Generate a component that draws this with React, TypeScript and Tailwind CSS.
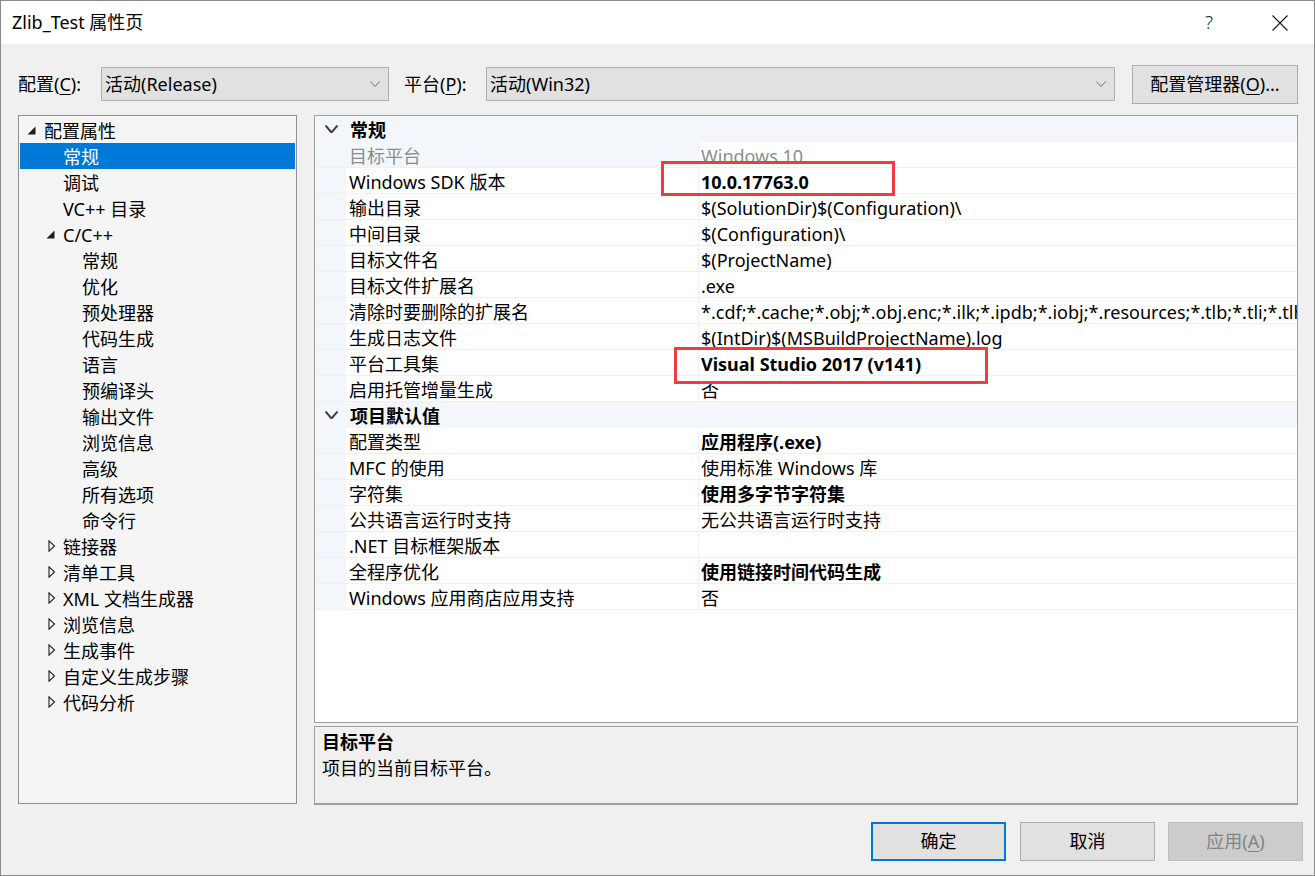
import React from "react";

type TreeItem = {
  label: string;
  level: 0 | 1 | 2;
  arrow?: "open" | "closed";
  selected?: boolean;
};

const treeItems: TreeItem[] = [
  { label: "配置属性", level: 0, arrow: "open" },
  { label: "常规", level: 1, selected: true },
  { label: "调试", level: 1 },
  { label: "VC++ 目录", level: 1 },
  { label: "C/C++", level: 1, arrow: "open" },
  { label: "常规", level: 2 },
  { label: "优化", level: 2 },
  { label: "预处理器", level: 2 },
  { label: "代码生成", level: 2 },
  { label: "语言", level: 2 },
  { label: "预编译头", level: 2 },
  { label: "输出文件", level: 2 },
  { label: "浏览信息", level: 2 },
  { label: "高级", level: 2 },
  { label: "所有选项", level: 2 },
  { label: "命令行", level: 2 },
  { label: "链接器", level: 1, arrow: "closed" },
  { label: "清单工具", level: 1, arrow: "closed" },
  { label: "XML 文档生成器", level: 1, arrow: "closed" },
  { label: "浏览信息", level: 1, arrow: "closed" },
  { label: "生成事件", level: 1, arrow: "closed" },
  { label: "自定义生成步骤", level: 1, arrow: "closed" },
  { label: "代码分析", level: 1, arrow: "closed" },
];

type GridRow =
  | { kind: "cat"; label: string }
  | { kind: "prop"; name: string; value: string; bold?: boolean; disabled?: boolean };

const gridRows: GridRow[] = [
  { kind: "cat", label: "常规" },
  { kind: "prop", name: "目标平台", value: "Windows 10", disabled: true },
  { kind: "prop", name: "Windows SDK 版本", value: "10.0.17763.0", bold: true },
  { kind: "prop", name: "输出目录", value: "$(SolutionDir)$(Configuration)\\" },
  { kind: "prop", name: "中间目录", value: "$(Configuration)\\" },
  { kind: "prop", name: "目标文件名", value: "$(ProjectName)" },
  { kind: "prop", name: "目标文件扩展名", value: ".exe" },
  {
    kind: "prop",
    name: "清除时要删除的扩展名",
    value:
      "*.cdf;*.cache;*.obj;*.obj.enc;*.ilk;*.ipdb;*.iobj;*.resources;*.tlb;*.tli;*.tlh;*.tmp;*.rsp;*.pgc;*.pgd;*.meta;*.tlog;*.manifest;*.res;*.pch;*.exp;*.idb;*.rep;*.xdc;*.pdb",
  },
  { kind: "prop", name: "生成日志文件", value: "$(IntDir)$(MSBuildProjectName).log" },
  { kind: "prop", name: "平台工具集", value: "Visual Studio 2017 (v141)", bold: true },
  { kind: "prop", name: "启用托管增量生成", value: "否" },
  { kind: "cat", label: "项目默认值" },
  { kind: "prop", name: "配置类型", value: "应用程序(.exe)", bold: true },
  { kind: "prop", name: "MFC 的使用", value: "使用标准 Windows 库" },
  { kind: "prop", name: "字符集", value: "使用多字节字符集", bold: true },
  { kind: "prop", name: "公共语言运行时支持", value: "无公共语言运行时支持" },
  { kind: "prop", name: ".NET 目标框架版本", value: "" },
  { kind: "prop", name: "全程序优化", value: "使用链接时间代码生成", bold: true },
  { kind: "prop", name: "Windows 应用商店应用支持", value: "否" },
];

const OpenArrow = () => (
  <svg width="9" height="9" viewBox="0 0 9 9">
    <polygon points="8.5,0.5 8.5,8.5 0.5,8.5" fill="#1e1e1e" />
  </svg>
);

const ClosedArrow = () => (
  <svg width="9" height="12" viewBox="0 0 9 12" className="ml-[2px]">
    <polygon points="1,0.8 6.5,6 1,11.2" fill="none" stroke="#1e1e1e" strokeWidth="1.1" />
  </svg>
);

const Chevron = ({ color = "#707070", w = 10, h = 6, sw = 1 }: { color?: string; w?: number; h?: number; sw?: number }) => (
  <svg width={w} height={h} viewBox={`0 0 ${w} ${h}`}>
    <polyline points={`0.5,0.5 ${w / 2},${h - 0.5} ${w - 0.5},0.5`} fill="none" stroke={color} strokeWidth={sw} />
  </svg>
);

function TreeRow({ item }: { item: TreeItem }) {
  const pad = item.level === 0 ? "pl-[7px]" : item.level === 1 ? "pl-[26px]" : "pl-[45px]";
  return (
    <div
      className={`h-[26px] flex items-center mx-[1px] ${pad} ${
        item.selected ? "bg-[#0078d7] text-white" : "text-[#000]"
      }`}
    >
      <span className="w-[17px] flex items-center">
        {item.arrow === "open" && <OpenArrow />}
        {item.arrow === "closed" && <ClosedArrow />}
      </span>
      <span className="whitespace-nowrap pt-[2px]">{item.label}</span>
    </div>
  );
}

function GridLine({ row }: { row: GridRow }) {
  if (row.kind === "cat") {
    return (
      <div className="h-[26px] flex items-center bg-[#f3f6fb]">
        <span className="w-[31px] flex justify-center pl-[1px]">
          <Chevron color="#404040" w={13} h={8} sw={2} />
        </span>
        <span className="pl-[4px] pt-[3px] font-bold">{row.label}</span>
      </div>
    );
  }
  return (
    <div className="h-[26px] flex border-b border-[#eef0f6]">
      <div className="w-[31px] shrink-0 bg-[#f3f6fb]" />
      <div
        className={`w-[352px] shrink-0 pl-[3px] pt-[3px] flex items-center whitespace-nowrap ${
          row.disabled ? "bg-[#f3f6fb] text-[#8d8d8d]" : "text-[#000]"
        }`}
      >
        {row.name}
      </div>
      <div
        className={`flex-1 min-w-0 pl-[2px] pt-[3px] flex items-center whitespace-nowrap overflow-hidden border-l border-[#eef0f6] ${
          row.bold ? "font-bold" : ""
        } ${row.disabled ? "text-[#8d8d8d]" : "text-[#000]"}`}
      >
        {row.value}
      </div>
    </div>
  );
}

export default function App() {
  return (
    <div className="relative w-[1315px] h-[876px] bg-[#f0f0f0] border border-[#8a8a8a] flex flex-col text-[18px] font-['Noto_Sans','Noto_Sans_CJK_SC',sans-serif] text-[#000] overflow-hidden">
      {/* title bar */}
      <div className="h-[43px] bg-white flex items-center shrink-0">
        <span className="pl-[11px] text-[18px] text-[#000]">Zlib_Test 属性页</span>
        <span className="ml-auto text-[19px] text-[#1e1e1e] font-light">?</span>
        <svg width="16" height="16" viewBox="0 0 16 16" className="ml-[59px] mr-[26px]">
          <path d="M0.5 0.5 L15.5 15.5 M15.5 0.5 L0.5 15.5" stroke="#1e1e1e" strokeWidth="1.2" />
        </svg>
      </div>

      {/* configuration row */}
      <div className="mt-[20px] h-[39px] flex items-center pl-[17px] pt-[1px] shrink-0">
        <span className="w-[83px] whitespace-nowrap">
          配置(<span className="underline underline-offset-[3px]">C</span>):
        </span>
        <div className="w-[288px] h-[34px] bg-[#e1e1e1] border border-[#adadad] flex items-center pl-[3px] pr-[8px]">
          <span>活动(Release)</span>
          <span className="ml-auto">
            <Chevron />
          </span>
        </div>
        <span className="ml-[15px] w-[82px] whitespace-nowrap">
          平台(<span className="underline underline-offset-[3px]">P</span>):
        </span>
        <div className="w-[629px] h-[34px] bg-[#e1e1e1] border border-[#adadad] flex items-center pl-[3px] pr-[8px]">
          <span>活动(Win32)</span>
          <span className="ml-auto">
            <Chevron />
          </span>
        </div>
        <button className="ml-[17px] w-[166px] h-[39px] bg-[#e1e1e1] border border-[#adadad] flex items-center justify-center whitespace-nowrap">
          配置管理器(<span className="underline underline-offset-[3px]">O</span>)...
        </button>
      </div>

      {/* main area */}
      <div className="mt-[12px] flex pl-[17px] shrink-0">
        <div className="w-[279px] h-[689px] bg-[#f5f5f5] border border-[#8e8f94] pt-[1px]">
          {treeItems.map((item, i) => (
            <TreeRow key={i} item={item} />
          ))}
        </div>
        <div className="ml-[17px] w-[984px] flex flex-col">
          <div className="h-[608px] bg-white border border-[#a0a0a0] overflow-hidden">
            {gridRows.map((row, i) => (
              <GridLine key={i} row={row} />
            ))}
          </div>
          <div className="mt-[3px] h-[79px] bg-[#f0f0f0] border border-[#a0a0a0] border-b-2 pl-[7px] pt-[2px]">
            <div className="font-bold leading-[26px]">目标平台</div>
            <div className="leading-[26px]">项目的当前目标平台。</div>
          </div>
        </div>
      </div>

      {/* buttons */}
      <div className="mt-[17px] flex justify-end pr-[11px] shrink-0">
        <button className="w-[135px] h-[39px] bg-[#e1e1e1] border-2 border-[#0078d7]">确定</button>
        <button className="ml-[14px] w-[135px] h-[39px] bg-[#e1e1e1] border border-[#adadad]">取消</button>
        <button className="ml-[13px] w-[135px] h-[39px] bg-[#cccccc] border border-[#bfbfbf] text-[#838383]">
          应用(<span className="underline underline-offset-[3px]">A</span>)
        </button>
      </div>

      {/* red highlight boxes */}
      <div className="absolute left-[660px] top-[160px] w-[234px] h-[35px] border-[3px] border-[#f03c3c]" />
      <div className="absolute left-[673px] top-[346px] w-[314px] h-[37px] border-[3px] border-[#f03c3c]" />
    </div>
  );
}
